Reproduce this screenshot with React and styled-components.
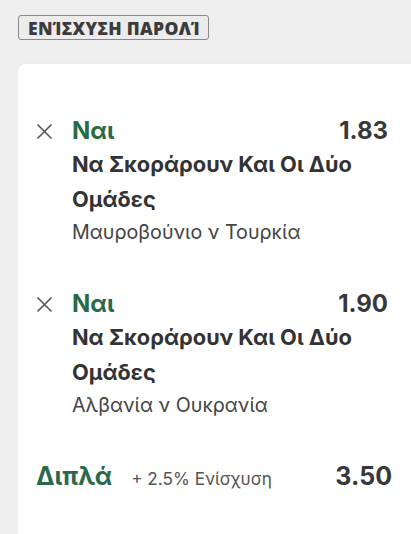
import React from "react";
import styled, { createGlobalStyle } from "styled-components";

const Global = createGlobalStyle`
  html, body { margin: 0; padding: 0; background: #efefef; }
  body { font-family: Inter, "Noto Sans", sans-serif; -webkit-font-smoothing: antialiased; }
`;

const Page = styled.div`
  padding: 15px 0 0 18px;
  min-height: 534px;
  box-sizing: border-box;
  overflow: hidden;
`;

const Badge = styled.div`
  display: inline-flex;
  align-items: center;
  height: 25px;
  box-sizing: border-box;
  padding: 0 8px 0 9px;
  border: 1.5px solid #8a8a8a;
  border-radius: 3px;
  background: #ececec;
  font-family: "Open Sans", "Noto Sans", sans-serif;
  font-weight: 800;
  font-size: 17.5px;
  color: #3b3b3b;
  letter-spacing: 0.3px;
`;

const Card = styled.div`
  margin-top: 24px;
  margin-right: -20px;
  background: #fff;
  border-radius: 7px 0 0 0;
  box-shadow: 0 0 2px rgba(0,0,0,0.06);
  padding: 52px 43px 60px 18px;
`;

const Bet = styled.div`
  display: grid;
  grid-template-columns: 36px 1fr auto;
  margin-bottom: 42px;
`;

const Close = styled.div`
  width: 36px;
  height: 30px;
  display: flex;
  align-items: center;
  color: #555;
`;

const Selection = styled.div`
  font-size: 24px;
  font-weight: 700;
  color: #2a6a49;
  line-height: 30px;
`;

const Odds = styled.div`
  font-size: 24px;
  font-weight: 700;
  color: #383838;
  line-height: 30px;
  text-align: right;
`;

const Details = styled.div`
  grid-column: 2 / 4;
`;

const Market = styled.div`
  font-size: 21.8px;
  font-weight: 700;
  color: #333;
  line-height: 35px;
  margin-top: 1px;
`;

const Event = styled.div`
  font-size: 19.7px;
  font-weight: 400;
  color: #444;
  line-height: 30px;
`;

const Summary = styled.div`
  display: flex;
  align-items: baseline;
  margin-top: -1px;
  line-height: 30px;
`;

const SumLabel = styled.div`
  font-size: 25px;
  font-weight: 700;
  color: #2a6a49;
`;

const Boost = styled.div`
  font-size: 17.2px;
  color: #555;
  margin-left: 19px;
  flex: 1;
`;

const SumOdds = styled.div`
  font-size: 25px;
  font-weight: 700;
  color: #383838;
  margin-right: -4px;
`;

const XIcon = () => (
  <svg width="17" height="17" viewBox="0 0 17 17" fill="none" stroke="currentColor" strokeWidth="1.6">
    <path d="M1.5 1.5 L15.5 15.5 M15.5 1.5 L1.5 15.5" />
  </svg>
);

const bets = [
  { odds: "1.83", event: "Μαυροβούνιο ν Τουρκία" },
  { odds: "1.90", event: "Αλβανία ν Ουκρανία" },
];

export default function App() {
  return (
    <>
      <Global />
      <Page>
        <Badge>ΕΝΊΣΧΥΣΗ ΠΑΡΟΛΊ</Badge>
        <Card>
          {bets.map((b) => (
            <Bet key={b.odds}>
              <Close><XIcon /></Close>
              <Selection>Ναι</Selection>
              <Odds>{b.odds}</Odds>
              <div />
              <Details>
                <Market>Να Σκοράρουν Και Οι Δύο Ομάδες</Market>
                <Event>{b.event}</Event>
              </Details>
            </Bet>
          ))}
          <Summary>
            <SumLabel>Διπλά</SumLabel>
            <Boost>+ 2.5% Ενίσχυση</Boost>
            <SumOdds>3.50</SumOdds>
          </Summary>
        </Card>
      </Page>
    </>
  );
}
